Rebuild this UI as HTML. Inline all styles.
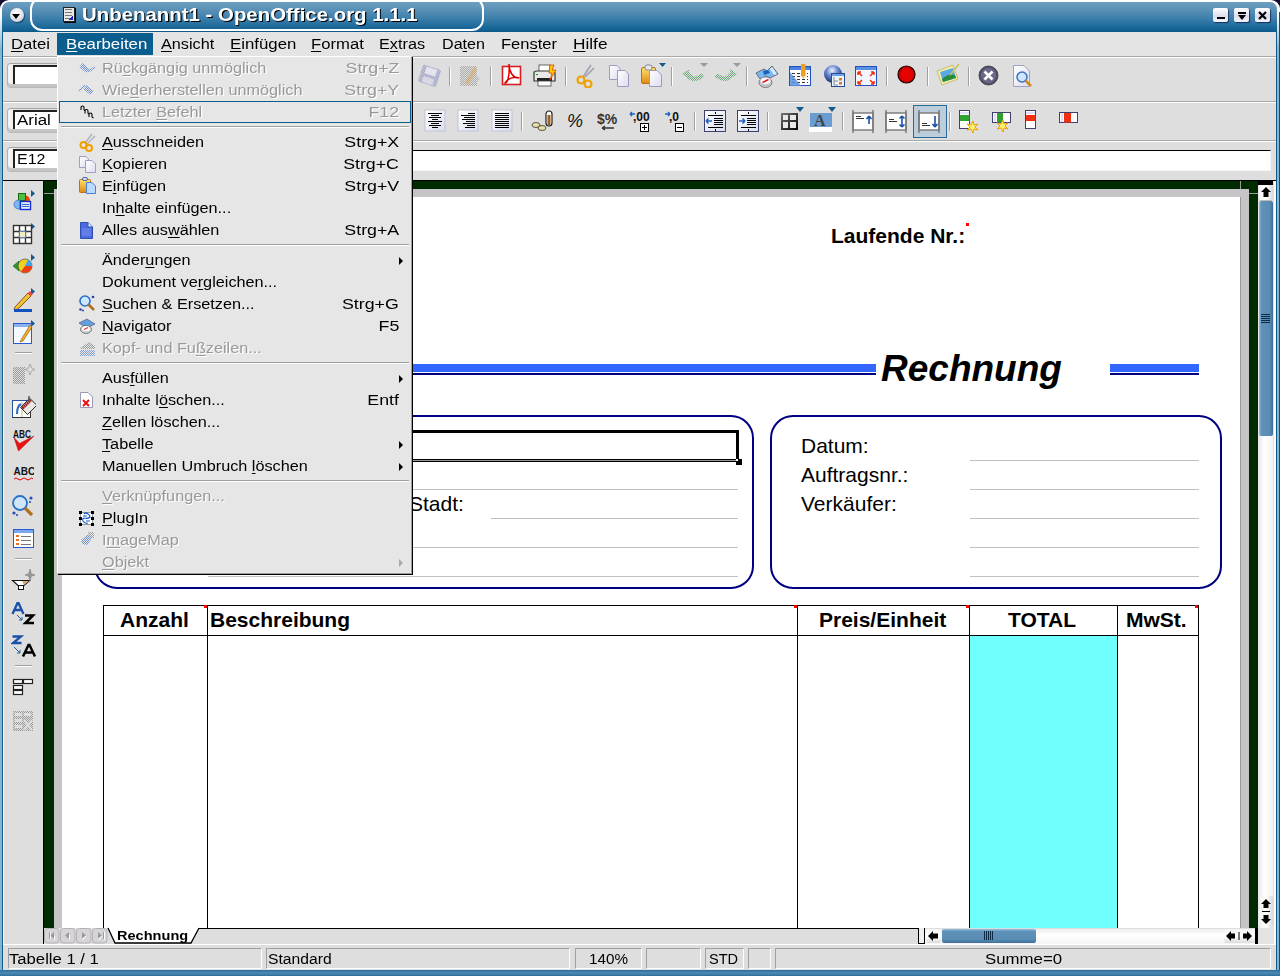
<!DOCTYPE html>
<html><head><meta charset="utf-8">
<style>
*{box-sizing:border-box}
html,body{margin:0;padding:0}
body{width:1280px;height:976px;overflow:hidden;position:relative;background:#e4e4e4;font-family:"Liberation Sans",sans-serif;}
.a{position:absolute}
.t{position:absolute;white-space:pre;line-height:1;font-size:14px;color:#000;transform-origin:0 0}
.u{text-decoration:underline;text-underline-offset:2px}
.m{transform:scaleX(1.16)}
.m.r{transform-origin:100% 0;transform:scaleX(1.27)}
.dis{color:#999;text-shadow:1px 1px 0 #fff}
.sep{width:2px;height:19px;border-left:1px solid #a0a0a0;border-right:1px solid #fff}
</style></head><body>

<!-- desktop corners -->
<div class="a" style="left:0;top:0;width:12px;height:12px;background:#140c30"></div>
<div class="a" style="left:1268px;top:0;width:12px;height:12px;background:#140c30"></div>
<!-- window frame -->
<div class="a" style="left:0;top:0;width:1280px;height:976px;border-radius:9px 9px 0 0;background:linear-gradient(#fff 0,#fff 14px,#8ab3d0 50px,#8ab3d0 100%)"></div>
<div class="a" style="left:2px;top:2px;width:1275px;height:968px;border-radius:7px 7px 0 0;background:linear-gradient(#6c9fc1 0,#5f94b9 6px,#4282ad 15px,#1f6c9c 24px,#0f5f90 29px,#0a5283 30px,#0c5c8c 31px,#0c5c8c 100%)"></div>
<div class="a" style="left:1279px;top:12px;width:1px;height:964px;background:#1a4a70"></div>
<div class="a" style="left:0;top:970px;width:1280px;height:6px;background:linear-gradient(#2a6e9c,#4f8ab3 50%,#2a6e9c)"></div>
<!-- title pill -->
<div class="a" style="left:30px;top:-3px;width:454px;height:34px;border:2.5px solid #fff;border-radius:12px;"></div>

<!-- UI area -->
<div class="a" style="left:3px;top:32px;width:1273px;height:938px;background:#e4e4e4"></div>


<!-- title content -->
<div class="a" style="left:10px;top:8px;width:14px;height:14px;border-radius:50%;background:radial-gradient(circle at 45% 35%,#fff 0,#e8e8f0 45%,#b8bccc 100%);box-shadow:1px 1px 1px rgba(0,0,40,.5)"></div>
<div class="a" style="left:12px;top:14px;width:0;height:0;border-left:4.5px solid transparent;border-right:4.5px solid transparent;border-top:5px solid #000"></div>
<div class="a" style="left:63px;top:7px;width:12px;height:15px;background:#e8e8e8;border:1px solid #222;box-shadow:1px 1px 0 #000"></div>
<div class="a" style="left:65px;top:9px;width:7px;height:1px;background:#777;box-shadow:0 3px 0 #777,0 6px 0 #777,0 9px 0 #777"></div>
<div class="a" style="left:69px;top:16px;width:4px;height:4px;background:linear-gradient(135deg,transparent 50%,#2020c0 50%)"></div>
<div class="t" style="left:82px;top:5.5px;font-size:18.5px;font-weight:bold;color:#fff;text-shadow:1px 1px 0 #000;transform:scaleX(1.103)">Unbenannt1 - OpenOffice.org 1.1.1</div>

<!-- title buttons -->
<div class="a" style="left:1213px;top:8px;width:15px;height:14px;border-radius:2px;background:linear-gradient(#fff,#dde 60%,#f4f4ff);box-shadow:1px 1px 1px rgba(0,0,50,.6)"></div>
<div class="a" style="left:1217px;top:17px;width:8px;height:2px;background:#000"></div>
<div class="a" style="left:1234px;top:8px;width:15px;height:14px;border-radius:2px;background:linear-gradient(#fff,#dde 60%,#f4f4ff);box-shadow:1px 1px 1px rgba(0,0,50,.6)"></div>
<div class="a" style="left:1238px;top:12px;width:8px;height:2px;background:#000"></div>
<div class="a" style="left:1238px;top:15px;width:0;height:0;border-left:4px solid transparent;border-right:4px solid transparent;border-top:5px solid #000"></div>
<div class="a" style="left:1255px;top:8px;width:15px;height:14px;border-radius:2px;background:linear-gradient(#fff,#dde 60%,#f4f4ff);box-shadow:1px 1px 1px rgba(0,0,50,.6)"></div>
<svg class="a" style="left:1258px;top:11px" width="9" height="9"><path d="M1 1L8 8M8 1L1 8" stroke="#000" stroke-width="2.2"/></svg>

<!-- menubar -->
<div class="a" style="left:3px;top:56px;width:1273px;height:1px;background:#a8a8a8"></div>
<div class="a" style="left:3px;top:57px;width:1273px;height:1px;background:#fff"></div>
<div class="a" style="left:57px;top:33px;width:96px;height:22px;background:#0b5d8e"></div>
<div class="t" style="left:11px;top:37px;transform:scaleX(1.19)"><span class="u">D</span>atei</div>
<div class="t" style="left:65.5px;top:37px;color:#fff;transform:scaleX(1.2)"><span class="u">B</span>earbeiten</div>
<div class="t" style="left:161px;top:37px;transform:scaleX(1.16)"><span class="u">A</span>nsicht</div>
<div class="t" style="left:230px;top:37px;transform:scaleX(1.2)"><span class="u">E</span>infügen</div>
<div class="t" style="left:311px;top:37px;transform:scaleX(1.19)"><span class="u">F</span>ormat</div>
<div class="t" style="left:379px;top:37px;transform:scaleX(1.16)">E<span class="u">x</span>tras</div>
<div class="t" style="left:442px;top:37px;transform:scaleX(1.15)">Da<span class="u">t</span>en</div>
<div class="t" style="left:501px;top:37px;transform:scaleX(1.18)">Fen<span class="u">s</span>ter</div>
<div class="t" style="left:573px;top:37px;transform:scaleX(1.23)"><span class="u">H</span>ilfe</div>

<!-- toolbar rows -->
<div class="a" style="left:3px;top:58px;width:1273px;height:43px;background:#dedede"></div>
<div class="a" style="left:3px;top:101px;width:1273px;height:1px;background:#a8a8a8"></div>
<div class="a" style="left:3px;top:102px;width:1273px;height:1px;background:#fff"></div>
<div class="a" style="left:3px;top:103px;width:1273px;height:37px;background:#dedede"></div>
<div class="a" style="left:3px;top:140px;width:1273px;height:1px;background:#a8a8a8"></div>
<div class="a" style="left:3px;top:141px;width:1273px;height:1px;background:#fff"></div>
<div class="a" style="left:3px;top:142px;width:1273px;height:38px;background:#dedede"></div>
<div class="a" style="left:3px;top:180px;width:1273px;height:1px;background:#000"></div>

<!-- combos -->
<div class="a" style="left:7px;top:63px;width:200px;height:24px;border-radius:4px;border-top:1px solid #a4a4a4;border-left:1px solid #b0b0b0;background:linear-gradient(90deg,#f8f8f8,#e4e4e4 10px);box-shadow:0 1px 0 #b8b8b8, inset 0 -3px 1px #c4c4c4"></div>
<div class="a" style="left:13px;top:65px;width:190px;height:19px;background:#fff;border-top:2px solid #222;border-left:2px solid #222"></div>
<div class="a" style="left:7px;top:108px;width:200px;height:24px;border-radius:4px;border-top:1px solid #a4a4a4;border-left:1px solid #b0b0b0;background:linear-gradient(90deg,#f8f8f8,#e4e4e4 10px);box-shadow:0 1px 0 #b8b8b8, inset 0 -3px 1px #c4c4c4"></div>
<div class="a" style="left:13px;top:110px;width:190px;height:19px;background:#fff;border-top:2px solid #222;border-left:2px solid #222"></div>
<div class="t" style="left:17px;top:113px;transform:scaleX(1.21)">Arial</div>
<div class="a" style="left:7px;top:147px;width:100px;height:24px;border-radius:4px;border-top:1px solid #a4a4a4;border-left:1px solid #b0b0b0;background:linear-gradient(90deg,#f8f8f8,#e4e4e4 10px);box-shadow:0 1px 0 #b8b8b8, inset 0 -3px 1px #c4c4c4"></div>
<div class="a" style="left:13px;top:149px;width:90px;height:19px;background:#fff;border-top:2px solid #222;border-left:2px solid #222"></div>
<div class="t" style="left:17px;top:152px;font-size:14px;transform:scaleX(1.14)">E12</div>
<!-- formula input -->
<div class="a" style="left:200px;top:150px;width:1071px;height:21px;background:#fff;border-top:1px solid #000;border-right:1px solid #f4f4f4;border-bottom:1px solid #f4f4f4"></div>


<!-- ICONS_TB_START -->
<svg class="a" style="left:0;top:0" width="1" height="1"><defs>
<pattern id="dith" width="2" height="2" patternUnits="userSpaceOnUse"><rect width="1" height="1" fill="#8890c0"/><rect x="1" y="1" width="1" height="1" fill="#8890c0"/></pattern>
<pattern id="dithg" width="2" height="2" patternUnits="userSpaceOnUse"><rect width="1" height="1" fill="#6aaa78"/><rect x="1" y="1" width="1" height="1" fill="#6aaa78"/></pattern>
<pattern id="dithgr" width="2" height="2" patternUnits="userSpaceOnUse"><rect width="1" height="1" fill="#9a9a9a"/><rect x="1" y="1" width="1" height="1" fill="#9a9a9a"/></pattern>
<pattern id="dithb" width="2" height="2" patternUnits="userSpaceOnUse"><rect width="1" height="1" fill="#7090d0"/><rect x="1" y="1" width="1" height="1" fill="#7090d0"/></pattern>
<linearGradient id="gold" x1="0" y1="0" x2="0" y2="1"><stop offset="0" stop-color="#ffe070"/><stop offset="1" stop-color="#e08a10"/></linearGradient>
<linearGradient id="page" x1="0" y1="0" x2="1" y2="1"><stop offset="0" stop-color="#fff"/><stop offset="1" stop-color="#dcdcf0"/></linearGradient>
<linearGradient id="btn" x1="0" y1="0" x2="1" y2="1"><stop offset="0" stop-color="#fff"/><stop offset="1" stop-color="#d8dcf0"/></linearGradient>
<linearGradient id="blu" x1="0" y1="0" x2="0" y2="1"><stop offset="0" stop-color="#9cc4f4"/><stop offset="1" stop-color="#2c64d0"/></linearGradient>
</defs></svg>
<!-- toolbar separators row1 -->
<div class="a sep" style="left:449px;top:67px"></div>
<div class="a sep" style="left:490px;top:67px"></div>
<div class="a sep" style="left:565px;top:67px"></div>
<div class="a sep" style="left:671px;top:67px"></div>
<div class="a sep" style="left:746px;top:67px"></div>
<div class="a sep" style="left:886px;top:67px"></div>
<div class="a sep" style="left:927px;top:67px"></div>
<div class="a sep" style="left:968px;top:67px"></div>
<!-- row2 separators -->
<div class="a sep" style="left:521px;top:112px"></div>
<div class="a sep" style="left:694px;top:112px"></div>
<div class="a sep" style="left:767px;top:112px"></div>
<div class="a sep" style="left:842px;top:112px"></div>
<div class="a sep" style="left:949px;top:112px"></div>

<!-- save disabled -->
<svg class="a" style="left:417px;top:63px" width="26" height="26"><g transform="rotate(18 13 13)"><rect x="3" y="4" width="19" height="18" rx="2" fill="url(#dith)"/><rect x="7" y="5" width="11" height="7" fill="#e4e4ee"/><rect x="7" y="15" width="11" height="6" fill="#d8d8e4"/></g></svg>
<!-- edit disabled -->
<svg class="a" style="left:459px;top:64px" width="24" height="24"><rect x="1" y="2" width="17" height="20" fill="url(#dithgr)" opacity=".75"/><path d="M6 19L15 3L18 5L9 21Z" fill="#d8b070" opacity=".7"/><path d="M18 12L21 15L18 18Z" fill="#c8c8c8"/></svg>
<!-- pdf -->
<svg class="a" style="left:501px;top:64px" width="22" height="23"><rect x="1.5" y="2.5" width="18" height="18" fill="#fff" stroke="#d42020" stroke-width="1.6"/><path d="M8 0C8 8 12 14 18 14C14 12 7 14 4 19C6 20 9 12 8 1" fill="none" stroke="#e00000" stroke-width="1.5"/></svg>
<!-- printer -->
<svg class="a" style="left:533px;top:64px" width="25" height="24"><rect x="6" y="1" width="11" height="7" fill="#fff" stroke="#444" stroke-width=".8"/><path d="M1 9Q1 7 4 7H19Q22 7 22 9V17H1Z" fill="#e8e8e8" stroke="#333" stroke-width="1.2"/><rect x="4" y="14" width="15" height="3" fill="#222"/><rect x="5" y="17" width="13" height="5" fill="#fff" stroke="#444" stroke-width=".8"/><rect x="3" y="10" width="2" height="1" fill="#0a0"/><path d="M17 1L21 1L19 6L23 6L17 16L19 9L16 9Z" fill="#ffd000" stroke="#e04000" stroke-width=".8"/></svg>
<!-- scissors -->
<svg class="a" style="left:576px;top:64px" width="20" height="24"><path d="M7 13L15 1M9 13L18 4" stroke="#a0a0b0" stroke-width="1.6"/><circle cx="5" cy="16" r="3.5" fill="none" stroke="#f0a000" stroke-width="2.2"/><circle cx="12" cy="20" r="3.5" fill="none" stroke="#f0a000" stroke-width="2.2"/></svg>
<!-- copy -->
<svg class="a" style="left:608px;top:64px" width="23" height="24"><path d="M1.5 1.5H9L12 4.5V15.5H1.5Z" fill="url(#page)" stroke="#9c9cc0"/><path d="M9.5 6.5H17L20.5 10V22.5H9.5Z" fill="url(#page)" stroke="#9c9cc0"/></svg>
<!-- paste -->
<svg class="a" style="left:640px;top:63px" width="28" height="25"><rect x="1.5" y="4.5" width="14" height="16" rx="1.5" fill="url(#gold)" stroke="#c07010"/><rect x="5" y="2" width="7" height="5" rx="2" fill="#e8e8f0" stroke="#888"/><path d="M9.5 7.5H17L21.5 12V23.5H9.5Z" fill="url(#page)" stroke="#9c9cc0"/><path d="M19 0H26L22.5 4Z" fill="#15598a"/></svg>
<!-- undo / redo disabled -->
<svg class="a" style="left:681px;top:63px" width="28" height="22"><path d="M1 11L8 6V16Z" fill="url(#dithg)"/><path d="M7 11Q11 20 22 12" fill="none" stroke="url(#dithg)" stroke-width="4.5"/><path d="M19 0H27L23 4Z" fill="#9a9a9a"/></svg>
<svg class="a" style="left:714px;top:63px" width="28" height="22"><path d="M23 11L16 6V16Z" fill="url(#dithg)"/><path d="M17 11Q13 20 2 12" fill="none" stroke="url(#dithg)" stroke-width="4.5"/><path d="M19 0H27L23 4Z" fill="#9a9a9a"/></svg>
<!-- navigator -->
<svg class="a" style="left:755px;top:65px" width="24" height="23"><path d="M1 8L9 4L12 6L17 1L23 9L15 13L11 11L5 14Z" fill="#7ab8f0" stroke="#444" stroke-width=".7"/><path d="M8 6L13 5L15 8L9 10Z" fill="#1a60c0"/><path d="M17 2L22 9L19 10L15 4Z" fill="#d8ecff"/><ellipse cx="10.5" cy="17.5" rx="6.5" ry="5" fill="#c8c8c8" stroke="#666" stroke-width=".8"/><ellipse cx="10.5" cy="16" rx="5.5" ry="3.8" fill="#f4f8ff" stroke="#88a" stroke-width=".5"/><path d="M7.5 17.5L13.5 14.5" stroke="#e82020" stroke-width="1.6"/></svg>
<!-- page with pencil -->
<svg class="a" style="left:788px;top:64px" width="24" height="24"><rect x="1.5" y="2.5" width="21" height="19" fill="#fff" stroke="#2050c0"/><rect x="2" y="3" width="20" height="3" fill="#4a80e0"/><path d="M4 9.5H20M4 12.5H20M4 15.5H20M4 18.5H20" stroke="#333" stroke-width="1" stroke-dasharray="3 2"/><path d="M2 8L2 22L13 22Z" fill="#5a90e0" opacity=".85"/><rect x="13" y="0" width="4.5" height="12" fill="#f0a020"/><path d="M13 12L15.25 15L17.5 12Z" fill="#e8c890"/></svg>
<!-- globe -->
<svg class="a" style="left:823px;top:64px" width="23" height="24"><defs><radialGradient id="glb" cx=".45" cy=".3" r=".7"><stop offset="0" stop-color="#eef2ff"/><stop offset=".45" stop-color="#6a88d0"/><stop offset="1" stop-color="#1a2a70"/></radialGradient></defs><circle cx="10" cy="10" r="9" fill="url(#glb)"/><rect x="8.5" y="9.5" width="13" height="13" fill="#eaf4ff" stroke="#2a4a8a"/><rect x="9" y="10" width="12" height="2" fill="#6aa0e8"/><rect x="16" y="14" width="3" height="2.5" fill="#f07020"/><rect x="16" y="18" width="3" height="2.5" fill="#f07020"/><path d="M11 13V21H15M11 17H15" stroke="#777" fill="none" stroke-width=".8"/></svg>
<!-- fullscreen -->
<svg class="a" style="left:854px;top:65px" width="24" height="22"><rect x="1.5" y="1.5" width="21" height="19" fill="#f4f6ff" stroke="#1f4fc0"/><rect x="2" y="2" width="20" height="3" fill="#5b8fe0"/><path d="M4 7L8 11M4 7H7M4 7V10 M20 7L16 11M20 7H17M20 7V10 M4 19L8 15M4 19H7M4 19V16 M20 19L16 15M20 19H17M20 19V16" stroke="#f03000" stroke-width="1.5" fill="none"/></svg>
<!-- record -->
<svg class="a" style="left:897px;top:65px" width="20" height="20"><circle cx="9.5" cy="9.5" r="8.5" fill="#d00000" stroke="#200" stroke-width="1.2"/><circle cx="10" cy="10" r="6" fill="#e60000"/></svg>
<!-- picture -->
<svg class="a" style="left:936px;top:63px" width="25" height="24"><path d="M1 8L17 2L22 16L6 22Z" fill="#f4f0a0" stroke="#c0b060" stroke-width=".8"/><path d="M4 9L17 5L20 15L7 19Z" fill="#5aa8e8"/><path d="M6 16Q12 10 19 12L20 15L7 19Z" fill="#2a8a40"/><path d="M14 12L23 1" stroke="#c8c060" stroke-width="1.5"/></svg>
<!-- close circle -->
<svg class="a" style="left:978px;top:65px" width="22" height="22"><circle cx="10.5" cy="10.5" r="9.5" fill="#50506a" stroke="#333" stroke-width=".8"/><circle cx="10.5" cy="10.5" r="7.5" fill="#6a6a88"/><path d="M6.5 6.5L14.5 14.5M14.5 6.5L6.5 14.5" stroke="#fff" stroke-width="2.6"/></svg>
<!-- preview -->
<svg class="a" style="left:1012px;top:64px" width="22" height="24"><path d="M1.5 1.5H12L17.5 7V22.5H1.5Z" fill="url(#page)" stroke="#a0a0c0"/><circle cx="10" cy="13" r="5" fill="#cfe4ff" stroke="#3a70c0" stroke-width="1.5"/><path d="M13.5 16.5L19 22" stroke="#d08a20" stroke-width="2.5"/></svg>

<!-- ROW 2 -->
<svg class="a" style="left:424px;top:109px" width="23" height="24"><rect x="1" y="1" width="20" height="21" fill="url(#btn)" stroke="#b8bcd0" stroke-width=".8"/><rect x="4" y="4" width="14" height="1" fill="#000"/><rect x="7" y="6" width="8" height="1" fill="#000"/><rect x="5" y="8" width="12" height="1" fill="#000"/><rect x="8" y="10" width="6" height="1" fill="#000"/><rect x="4" y="12" width="14" height="1" fill="#000"/><rect x="7" y="14" width="8" height="1" fill="#000"/><rect x="5" y="16" width="12" height="1" fill="#000"/><rect x="8" y="18" width="6" height="1" fill="#000"/></svg>
<svg class="a" style="left:457px;top:109px" width="23" height="24"><rect x="1" y="1" width="20" height="21" fill="url(#btn)" stroke="#b8bcd0" stroke-width=".8"/><rect x="11" y="4" width="7" height="1" fill="#000"/><rect x="4" y="6" width="14" height="1" fill="#000"/><rect x="7" y="8" width="11" height="1" fill="#000"/><rect x="5" y="10" width="13" height="1" fill="#000"/><rect x="9" y="12" width="9" height="1" fill="#000"/><rect x="6" y="14" width="12" height="1" fill="#000"/><rect x="10" y="16" width="8" height="1" fill="#000"/><rect x="8" y="18" width="10" height="1" fill="#000"/></svg>
<svg class="a" style="left:491px;top:109px" width="23" height="24"><rect x="1" y="1" width="20" height="21" fill="url(#btn)" stroke="#b8bcd0" stroke-width=".8"/><rect x="4" y="4" width="14" height="1" fill="#000"/><rect x="4" y="6" width="14" height="1" fill="#000"/><rect x="4" y="8" width="14" height="1" fill="#000"/><rect x="4" y="10" width="14" height="1" fill="#000"/><rect x="4" y="12" width="14" height="1" fill="#000"/><rect x="4" y="14" width="14" height="1" fill="#000"/><rect x="4" y="16" width="14" height="1" fill="#000"/><rect x="4" y="18" width="14" height="1" fill="#000"/></svg>
<!-- currency -->
<svg class="a" style="left:531px;top:110px" width="24" height="22"><ellipse cx="5" cy="15" rx="4" ry="2.5" fill="#e8e0a0" stroke="#333" stroke-width=".8"/><ellipse cx="11" cy="18" rx="4" ry="2.5" fill="#e8e0a0" stroke="#333" stroke-width=".8"/><rect x="15" y="1" width="6" height="15" rx="3" fill="#fff" stroke="#222" stroke-width="1.2"/><rect x="16.5" y="5" width="3" height="10" fill="#a06020"/></svg>
<!-- percent -->
<svg class="a" style="left:567px;top:112px" width="20" height="18"><text x="0" y="15" font-family="Liberation Sans" font-size="18" fill="#111" font-style="italic">%</text></svg>
<!-- $% -->
<svg class="a" style="left:597px;top:111px" width="24" height="21"><text x="0" y="13" font-family="Liberation Sans" font-size="14" font-weight="bold" fill="#333">$%</text><path d="M5 17H17M5 17L8 15M5 17L8 19" stroke="#333" stroke-width="1.3" fill="none"/></svg>
<!-- +,00 -->
<svg class="a" style="left:629px;top:110px" width="24" height="23"><text x="4" y="11" font-family="Liberation Sans" font-size="12" font-weight="bold" fill="#111">,00</text><path d="M1 4H6M1 4L3 2M1 4L3 6" stroke="#2060c0" stroke-width="1.4" fill="none"/><rect x="11.5" y="13.5" width="8" height="8" fill="#fff" stroke="#000"/><path d="M13 17.5H18M15.5 15V20" stroke="#000"/></svg>
<!-- ,0- -->
<svg class="a" style="left:664px;top:110px" width="24" height="23"><text x="5" y="11" font-family="Liberation Sans" font-size="12" font-weight="bold" fill="#111">,0</text><path d="M1 4H6M6 4L4 2M6 4L4 6" stroke="#2060c0" stroke-width="1.4" fill="none"/><rect x="11.5" y="13.5" width="8" height="8" fill="#fff" stroke="#000"/><path d="M13 17.5H18" stroke="#000"/></svg>
<!-- indent -->
<svg class="a" style="left:703px;top:109px" width="25" height="25"><rect x="1.5" y="1.5" width="21" height="21" fill="url(#btn)" stroke="#404070"/><rect x="12" y="3" width="1" height="2" fill="#000"/><rect x="12" y="20" width="1" height="2" fill="#000"/><rect x="5" y="6" width="15" height="1" fill="#000"/><rect x="11" y="9" width="9" height="1" fill="#000"/><rect x="11" y="11" width="9" height="1" fill="#000"/><rect x="11" y="13" width="9" height="1" fill="#000"/><rect x="11" y="15" width="9" height="1" fill="#000"/><rect x="5" y="18" width="15" height="1" fill="#000"/><path d="M3 12H9M3 12L5.5 9.5M3 12L5.5 14.5" stroke="#2060c0" stroke-width="1.5" fill="none"/></svg>
<svg class="a" style="left:736px;top:109px" width="25" height="25"><rect x="1.5" y="1.5" width="21" height="21" fill="url(#btn)" stroke="#404070"/><rect x="12" y="3" width="1" height="2" fill="#000"/><rect x="12" y="20" width="1" height="2" fill="#000"/><rect x="5" y="6" width="15" height="1" fill="#000"/><rect x="11" y="9" width="9" height="1" fill="#000"/><rect x="11" y="11" width="9" height="1" fill="#000"/><rect x="11" y="13" width="9" height="1" fill="#000"/><rect x="11" y="15" width="9" height="1" fill="#000"/><rect x="5" y="18" width="15" height="1" fill="#000"/><path d="M3 12H9M9 12L6.5 9.5M9 12L6.5 14.5" stroke="#2060c0" stroke-width="1.5" fill="none"/></svg>
<!-- borders -->
<svg class="a" style="left:779px;top:107px" width="26" height="25"><defs><linearGradient id="bgr" x1="0" y1="0" x2="1" y2="1"><stop offset="0" stop-color="#777"/><stop offset="1" stop-color="#000"/></linearGradient></defs><rect x="2" y="6" width="17" height="17" fill="url(#bgr)"/><rect x="4" y="8" width="5" height="5" fill="#e8e8e8"/><rect x="11" y="8" width="6" height="5" fill="#e8e8e8"/><rect x="4" y="15" width="5" height="6" fill="#e8e8e8"/><rect x="11" y="15" width="6" height="6" fill="#e8e8e8"/><path d="M17 0H25L21 5Z" fill="#15598a"/></svg>
<!-- font color -->
<svg class="a" style="left:809px;top:107px" width="28" height="26"><rect x="1" y="6" width="22" height="14" fill="#6a9ed0"/><rect x="0" y="20" width="23" height="5" fill="#fff"/><text x="5" y="19" font-family="Liberation Serif" font-size="16" font-weight="bold" fill="#444">A</text><path d="M19 0H27L23 5Z" fill="#15598a"/></svg>
<!-- align top / vcenter / bottom -->
<svg class="a" style="left:851px;top:110px" width="25" height="24"><rect x="2" y="3" width="20" height="17" fill="#fff" stroke="#777" stroke-width="1.4"/><path d="M2 0V23M22 0V23" stroke="#777" stroke-width="1.4"/><rect x="5" y="6" width="5" height="1" fill="#333"/><rect x="5" y="8" width="8" height="1" fill="#333"/><path d="M18 14V6M18 6L15.5 9M18 6L20.5 9" stroke="#1b4fa8" stroke-width="1.6" fill="none"/></svg>
<svg class="a" style="left:884px;top:110px" width="25" height="24"><rect x="2" y="3" width="20" height="17" fill="#fff" stroke="#777" stroke-width="1.4"/><path d="M2 0V23M22 0V23" stroke="#777" stroke-width="1.4"/><rect x="5" y="9" width="5" height="1" fill="#333"/><rect x="5" y="11" width="8" height="1" fill="#333"/><path d="M18 6V17M18 6L15.5 8.5M18 6L20.5 8.5M18 17L15.5 14.5M18 17L20.5 14.5" stroke="#1b4fa8" stroke-width="1.6" fill="none"/></svg>
<div class="a" style="left:913px;top:105px;width:34px;height:33px;background:#bccedc;border:1px solid #2a6a96"></div>
<svg class="a" style="left:917px;top:110px" width="25" height="24"><rect x="2" y="3" width="20" height="17" fill="#fff" stroke="#777" stroke-width="1.4"/><path d="M2 0V23M22 0V23" stroke="#777" stroke-width="1.4"/><rect x="5" y="13" width="5" height="1" fill="#333"/><rect x="5" y="15" width="8" height="1" fill="#333"/><path d="M18 6V17M18 17L15.5 14M18 17L20.5 14" stroke="#1b4fa8" stroke-width="1.6" fill="none"/></svg>
<!-- insert rows / cols, delete rows / cols -->
<svg class="a" style="left:958px;top:109px" width="24" height="24"><rect x="1.5" y="1.5" width="10" height="18" fill="#fff" stroke="#404070"/><rect x="2" y="6" width="9.5" height="6" fill="#30a030"/><rect x="2" y="3" width="9" height="2" fill="#e0e0f8"/><path d="M15 12L16 16L20 15L17 18L20 21L16 20L15 24L13 20L9 21L12 18L9 15L13 16Z" fill="#fff070" stroke="#f0a000"/></svg>
<svg class="a" style="left:991px;top:111px" width="24" height="24"><rect x="1.5" y="1.5" width="18" height="10" fill="#fff" stroke="#404070"/><rect x="6" y="2" width="6" height="9.5" fill="#30a030"/><rect x="3" y="2" width="2" height="9" fill="#e0e0f8"/><path d="M12 9L13 13L17 12L14 15L17 18L13 17L12 21L10 17L6 18L9 15L6 12L10 13Z" fill="#fff070" stroke="#f0a000"/></svg>
<svg class="a" style="left:1024px;top:109px" width="14" height="22"><rect x="1.5" y="1.5" width="10" height="18" fill="#fff" stroke="#404070"/><rect x="2" y="6" width="9.5" height="6" fill="#f03010"/><rect x="2" y="3" width="9" height="2" fill="#e0e0f8"/></svg>
<svg class="a" style="left:1058px;top:111px" width="22" height="14"><rect x="1.5" y="1.5" width="18" height="10" fill="#fff" stroke="#404070"/><rect x="6" y="2" width="7" height="9.5" fill="#f03010"/><rect x="3" y="2" width="2" height="9" fill="#e0e0f8"/></svg>
<!-- ICONS_TB_END -->

<!-- left vertical toolbar -->
<div class="a" style="left:3px;top:181px;width:40px;height:764px;background:#dedede;border-left:1px solid #fff"></div>
<div class="a" style="left:43px;top:181px;width:1px;height:764px;background:#000"></div>

<!-- ICONS_LEFT_START -->
<!-- shapes -->
<svg class="a" style="left:12px;top:189px" width="24" height="23"><path d="M19 1V8L23 4.5Z" fill="#15598a"/><path d="M11 6Q18 6 18 12H11Z" fill="#f04010"/><rect x="6.5" y="4.5" width="7" height="7" fill="#4cc040" stroke="#1a6a10"/><path d="M8 11Q2 11 2 15.5Q2 20 8 20Z" fill="#7ab8f0" stroke="#3a70c0" stroke-width=".8"/><rect x="8.5" y="12.5" width="10" height="8" fill="#eaf4ff" stroke="#1030d0" stroke-width="1.4"/><path d="M10 15.5H17M10 17.5H17" stroke="#3060d0"/></svg>
<!-- table grid -->
<svg class="a" style="left:12px;top:222px" width="24" height="23"><path d="M19 1V8L23 4.5Z" fill="#15598a"/><rect x="1.5" y="3.5" width="18" height="18" fill="#fff" stroke="#333" stroke-width="1.4"/><path d="M7.5 3V22M13.5 3V22M1 9.5H20M1 15.5H20" stroke="#333" stroke-width="1.4"/><rect x="8" y="10" width="5" height="5" fill="#f0ecc0"/><rect x="7.5" y="9.5" width="6" height="6" fill="none" stroke="#6080c0"/></svg>
<!-- chart -->
<svg class="a" style="left:12px;top:253px" width="24" height="23"><path d="M19 1V8L23 4.5Z" fill="#15598a"/><path d="M1 13L7 8V18Z" fill="#2a9a30" stroke="#145a18" stroke-width=".6"/><circle cx="13" cy="13" r="7" fill="#f0d020" stroke="#333" stroke-width=".6"/><path d="M13 13L20 13A7 7 0 0 1 9 18.5Z" fill="#f04010"/><path d="M13 13L20 13A7 7 0 0 0 16 6.8Z" fill="#40a0f0"/></svg>
<!-- pencil -->
<svg class="a" style="left:12px;top:287px" width="24" height="26"><path d="M19 1V8L23 4.5Z" fill="#15598a"/><path d="M3 20L16 6L19 9L6 22L2 23Z" fill="#f4c030" stroke="#7a4a10" stroke-width=".9"/><path d="M16 6L18 4L21 7L19 9Z" fill="#f04040"/><rect x="2" y="22" width="18" height="3" fill="#1050c0"/></svg>
<!-- form -->
<svg class="a" style="left:12px;top:319px" width="24" height="27"><path d="M19 1V8L23 4.5Z" fill="#15598a"/><rect x="1.5" y="4.5" width="18" height="20" fill="#f4f8ff" stroke="#2a5ad0"/><rect x="2" y="5" width="17" height="3" fill="#8ab0f0"/><path d="M9 21L18 6L20 8L11 22L8 23Z" fill="#f4b030" stroke="#9a6010" stroke-width=".7"/></svg>
<div class="a" style="left:15px;top:352px;width:17px;height:1px;background:#a0a0a0;box-shadow:0 1px 0 #fff"></div>
<!-- disabled -->
<svg class="a" style="left:12px;top:363px" width="23" height="22"><rect x="1" y="4" width="12" height="17" fill="url(#dithgr)"/><path d="M18 1L19.5 5L23 6.5L19.5 8L18 12L16.5 8L13 6.5L16.5 5Z" fill="none" stroke="#aaa"/></svg>
<!-- paint -->
<svg class="a" style="left:11px;top:396px" width="25" height="25"><rect x="1.5" y="4.5" width="18" height="17" fill="#fffef4" stroke="#2a55a0"/><path d="M19.5 5V21.5H1.5" fill="none" stroke="#333"/><path d="M11 6V21" stroke="#bbb"/><path d="M6 18Q6 10 10 8" stroke="#2a6ad0" stroke-width="2" fill="none"/><g transform="rotate(45 18 10)"><rect x="13" y="4" width="10" height="13" fill="#e8e8e8" stroke="#222" stroke-width=".9"/><rect x="13.5" y="4.5" width="3" height="12" fill="#a02020"/><path d="M14 6H16M14 8H16M14 10H16M14 12H16M14 14H16" stroke="#fff" stroke-width=".6"/></g><path d="M18 0V6" stroke="#555" stroke-width="1.5"/></svg>
<!-- ABC check -->
<svg class="a" style="left:11px;top:428px" width="25" height="25"><text x="2" y="10" font-family="Liberation Sans" font-size="11" font-weight="bold" fill="#111" textLength="18" lengthAdjust="spacingAndGlyphs">ABC</text><path d="M3 9.5L7.5 23L23 8L8.5 15.5Z" fill="#ee1010" stroke="#a00" stroke-width=".5"/></svg>
<!-- ABC wavy -->
<svg class="a" style="left:13px;top:465px" width="21" height="17"><text x="0.5" y="10" font-family="Liberation Sans" font-size="10" font-weight="bold" fill="#111">ABC</text><path d="M1 14Q3 12 5 14T9 14T13 14T17 14T20 14" stroke="#e00000" fill="none" stroke-width="1"/></svg>
<!-- search -->
<svg class="a" style="left:11px;top:494px" width="25" height="24"><circle cx="9" cy="9" r="7" fill="#cfe6ff" stroke="#2a70c8" stroke-width="1.8"/><path d="M14 14L21 21" stroke="#b07020" stroke-width="3.2"/><circle cx="20" cy="4" r="1.6" fill="#2a50b0"/><circle cx="19" cy="8" r="1.1" fill="#2a50b0"/><circle cx="3" cy="19" r="1.6" fill="#2a50b0"/><circle cx="6" cy="21" r="1.1" fill="#2a50b0"/></svg>
<!-- list doc -->
<svg class="a" style="left:12px;top:527px" width="23" height="22"><rect x="1.5" y="2.5" width="20" height="18" fill="#fff" stroke="#2a5ad0"/><rect x="2" y="3" width="19" height="3" fill="#7aa8f0"/><rect x="4" y="8" width="3" height="2" fill="#f07020"/><rect x="4" y="12" width="3" height="2" fill="#f07020"/><rect x="4" y="16" width="3" height="2" fill="#f07020"/><rect x="9" y="9" width="10" height="1" fill="#777"/><rect x="9" y="13" width="10" height="1" fill="#777"/><rect x="9" y="17" width="10" height="1" fill="#777"/></svg>
<div class="a" style="left:15px;top:558px;width:17px;height:1px;background:#a0a0a0;box-shadow:0 1px 0 #fff"></div>
<!-- filter -->
<svg class="a" style="left:11px;top:568px" width="24" height="24"><path d="M1.5 12.5H18.5L13 17.5H7Z" fill="#fff" stroke="#111" stroke-width="1.2"/><path d="M11 13H18L13 17Z" fill="#d8a878"/><rect x="7.5" y="17.5" width="5" height="4" fill="#fff" stroke="#111"/><path d="M19 1L20.3 5.7L24 7L20.3 8.3L19 13L17.7 8.3L14 7L17.7 5.7Z" fill="#999" stroke="#777" stroke-width=".5"/></svg>
<!-- A-Z -->
<svg class="a" style="left:11px;top:602px" width="25" height="23"><path d="M1.5 12L6.5 1H7.5L12.5 12M3.5 8H10.5" fill="none" stroke="#1a50a8" stroke-width="2.3"/><path d="M14 13.5H22L14.5 21H23" fill="none" stroke="#000" stroke-width="2.6"/><path d="M6 13L11 18M11 18H8M11 18V15" stroke="#2a5aa0" stroke-width="1" fill="none"/></svg>
<!-- Z-A -->
<svg class="a" style="left:11px;top:635px" width="25" height="23"><path d="M1.5 1.5H10L2 8H10.5" fill="none" stroke="#1a50a8" stroke-width="2.3"/><path d="M12 21.5L17.5 10H18.5L24 21.5M14 17.5H22" fill="none" stroke="#000" stroke-width="2.5"/><path d="M3 12L9 18M9 18H6M9 18V15" stroke="#2a5aa0" stroke-width="1" fill="none"/></svg>
<div class="a" style="left:15px;top:665px;width:17px;height:1px;background:#a0a0a0;box-shadow:0 1px 0 #fff"></div>
<!-- table shape -->
<svg class="a" style="left:12px;top:678px" width="23" height="19"><rect x="1.5" y="1.5" width="9" height="4" fill="#fff" stroke="#222" stroke-width="1.2"/><rect x="11.5" y="1.5" width="9" height="4" fill="#fff" stroke="#222" stroke-width="1.2"/><rect x="1.5" y="7.5" width="9" height="4" fill="#fff" stroke="#222" stroke-width="1.2"/><rect x="1.5" y="12.5" width="9" height="4" fill="#fff" stroke="#222" stroke-width="1.2"/></svg>
<!-- disabled table -->
<svg class="a" style="left:12px;top:710px" width="23" height="22"><rect x="1" y="1" width="20" height="20" fill="url(#dithgr)"/><rect x="3" y="3" width="7" height="3" fill="#dedede"/><rect x="12" y="3" width="7" height="3" fill="#dedede"/><rect x="3" y="9" width="7" height="3" fill="#dedede"/><rect x="3" y="15" width="7" height="3" fill="#dedede"/><path d="M12 10L20 20M20 10L12 20" stroke="#dedede" stroke-width="2"/></svg>
<!-- ICONS_LEFT_END -->

<!-- content frame: green -->
<div class="a" style="left:44px;top:181px;width:1214px;height:747px;background:#002b00"></div>
<div class="a" style="left:54px;top:189px;width:1195px;height:739px;background:#c6c4c6"></div>
<div class="a" style="left:62px;top:197px;width:1178px;height:731px;background:#fff"></div>
<div class="a" style="left:1240px;top:197px;width:1px;height:731px;background:#9a9a9a"></div>
<div class="a" style="left:1240px;top:181px;width:1px;height:8px;background:#9a9a9a"></div>
<div class="a" style="left:1249px;top:193px;width:9px;height:1px;background:#9a9a9a"></div>
<div class="a" style="left:44px;top:193px;width:10px;height:1px;background:#9a9a9a"></div>


<!-- page content -->
<div class="t" style="left:831px;top:225px;font-size:21px;font-weight:bold">Laufende Nr.:</div>
<div class="a" style="left:966px;top:223px;width:3px;height:3px;background:#f00"></div>
<div class="a" style="left:95px;top:364px;width:781px;height:8px;background:#3366ff"></div>
<div class="a" style="left:95px;top:373px;width:781px;height:2px;background:#000080"></div>
<div class="a" style="left:1110px;top:364px;width:89px;height:8px;background:#3366ff"></div>
<div class="a" style="left:1110px;top:373px;width:89px;height:2px;background:#000080"></div>
<div class="t" style="left:881px;top:350px;font-size:37px;font-weight:bold;font-style:italic">Rechnung</div>

<div class="a" style="left:94px;top:415px;width:660px;height:174px;border:2px solid #000080;border-radius:23px"></div>
<div class="a" style="left:770px;top:415px;width:452px;height:174px;border:2px solid #000080;border-radius:23px"></div>

<div class="a" style="left:208px;top:489px;width:530px;height:1px;background:#c0c0c0"></div>
<div class="a" style="left:491px;top:518px;width:247px;height:1px;background:#c0c0c0"></div>
<div class="a" style="left:208px;top:547px;width:530px;height:1px;background:#c0c0c0"></div>
<div class="a" style="left:208px;top:576px;width:530px;height:1px;background:#c0c0c0"></div>
<div class="t" style="left:409px;top:493px;font-size:21px">Stadt:</div>
<div class="a" style="left:110px;top:430px;width:629px;height:3px;background:#000"></div>
<div class="a" style="left:736px;top:430px;width:3px;height:31px;background:#000"></div>
<div class="a" style="left:110px;top:459px;width:629px;height:1px;background:#000"></div>
<div class="a" style="left:110px;top:460px;width:629px;height:1px;background:#999"></div>
<div class="a" style="left:110px;top:461px;width:629px;height:1px;background:#000"></div>
<div class="a" style="left:736px;top:459px;width:6px;height:6px;background:#000"></div>
<div class="a" style="left:736px;top:459px;width:2px;height:2px;background:#fff"></div>

<div class="t" style="left:801px;top:435px;font-size:21px">Datum:</div>
<div class="t" style="left:801px;top:464px;font-size:21px">Auftragsnr.:</div>
<div class="t" style="left:801px;top:493px;font-size:21px">Verkäufer:</div>
<div class="a" style="left:970px;top:460px;width:229px;height:1px;background:#c0c0c0"></div>
<div class="a" style="left:970px;top:489px;width:229px;height:1px;background:#c0c0c0"></div>
<div class="a" style="left:970px;top:518px;width:229px;height:1px;background:#c0c0c0"></div>
<div class="a" style="left:970px;top:547px;width:229px;height:1px;background:#c0c0c0"></div>
<div class="a" style="left:970px;top:576px;width:229px;height:1px;background:#c0c0c0"></div>

<!-- table -->
<div class="a" style="left:970px;top:636px;width:147px;height:292px;background:#6fffff"></div>
<div class="a" style="left:103px;top:605px;width:1096px;height:1px;background:#000"></div>
<div class="a" style="left:103px;top:635px;width:1096px;height:1px;background:#000"></div>
<div class="a" style="left:103px;top:605px;width:1px;height:323px;background:#000"></div>
<div class="a" style="left:207px;top:605px;width:1px;height:323px;background:#000"></div>
<div class="a" style="left:797px;top:605px;width:1px;height:323px;background:#000"></div>
<div class="a" style="left:969px;top:605px;width:1px;height:323px;background:#000"></div>
<div class="a" style="left:1117px;top:605px;width:1px;height:323px;background:#000"></div>
<div class="a" style="left:1198px;top:605px;width:1px;height:323px;background:#000"></div>
<div class="a" style="left:204px;top:605px;width:3px;height:3px;background:#f00"></div>
<div class="a" style="left:794px;top:605px;width:3px;height:3px;background:#f00"></div>
<div class="a" style="left:966px;top:605px;width:3px;height:3px;background:#f00"></div>
<div class="a" style="left:1195px;top:605px;width:3px;height:3px;background:#f00"></div>
<div class="t" style="left:120px;top:609px;font-size:21px;font-weight:bold">Anzahl</div>
<div class="t" style="left:210px;top:609px;font-size:21px;font-weight:bold">Beschreibung</div>
<div class="t" style="left:819px;top:609px;font-size:21px;font-weight:bold">Preis/Einheit</div>
<div class="t" style="left:1008px;top:609px;font-size:21px;font-weight:bold">TOTAL</div>
<div class="t" style="left:1126px;top:609px;font-size:21px;font-weight:bold">MwSt.</div>

<!-- vertical scrollbar -->
<div class="a" style="left:1258px;top:181px;width:16px;height:4px;background:#000"></div>
<div class="a" style="left:1258px;top:185px;width:16px;height:743px;background:linear-gradient(90deg,#e8e4e8,#fff 40%,#f2f0f2)"></div>
<div class="a" style="left:1273px;top:181px;width:3px;height:764px;background:linear-gradient(90deg,#c8c8c8,#fff 40%,#f4f4f4)"></div>
<div class="a" style="left:1259px;top:185px;width:14px;height:15px;border-radius:2px;background:linear-gradient(90deg,#f4f4f4,#fff 50%,#d8d8d8);box-shadow:0 1px 0 #bbb"></div>
<svg class="a" style="left:1261px;top:187px" width="10" height="11"><path d="M5 0L10 5H7.5V10H2.5V5H0Z" fill="#000"/></svg>
<div class="a" style="left:1259px;top:201px;width:14px;height:235px;border-radius:2px;background:linear-gradient(90deg,#8ab8d8 0,#8ab8d8 1px,#5f92b8 2px,#5a8cb3 75%,#3c709c 100%)"></div>
<div class="a" style="left:1261px;top:314px;width:9px;height:1px;background:#0d2a44;box-shadow:0 2px 0 #0d2a44,0 4px 0 #0d2a44,0 6px 0 #0d2a44,0 8px 0 #0d2a44"></div>
<div class="a" style="left:1259px;top:896px;width:14px;height:32px;border-radius:2px;background:linear-gradient(90deg,#f0f0f0,#fff 50%,#d8d8d8)"></div>
<svg class="a" style="left:1260px;top:899px" width="12" height="26"><path d="M6 0L11 5H8.5V9H3.5V5H1Z M2 12.5H10 M6 25L11 20H8.5V16H3.5V20H1Z" fill="#000" stroke="#000" stroke-width="0"/><rect x="2" y="12" width="8" height="1" fill="#000"/></svg>

<!-- tab bar + hscroll -->
<div class="a" style="left:44px;top:928px;width:1214px;height:16px;background:#dedede"></div>
<div class="a" style="left:108px;top:928px;width:810px;height:1px;background:#000"></div>
<svg class="a" style="left:44px;top:928px" width="64" height="16"><g fill="#d6d4d8" stroke="#b4b2b8" stroke-width="1"><rect x="0.5" y="0.5" width="14.5" height="14.5" rx="3"/><rect x="16.5" y="0.5" width="14.5" height="14.5" rx="3"/><rect x="32.5" y="0.5" width="14.5" height="14.5" rx="3"/><rect x="48.5" y="0.5" width="14.5" height="14.5" rx="3"/></g>
<g fill="#9a9a9a"><rect x="5" y="4" width="1" height="7"/><path d="M6 7.5L10 4V11Z"/><path d="M21 7.5L25 4V11Z"/><path d="M38 4V11L42 7.5Z"/><path d="M54 4V11L58 7.5Z"/><rect x="59" y="4" width="1" height="7"/></g>
<g fill="#fff"><rect x="6" y="4" width="1" height="7" opacity=".8"/><rect x="10" y="8" width="1" height="4"/><rect x="25" y="7" width="1" height="5"/><path d="M38 11L42 7.5L42 8.5L39 12Z"/><path d="M54 11L58 7.5L58 8.5L55 12Z"/><rect x="60" y="4" width="1" height="8"/></g></svg>
<svg class="a" style="left:106px;top:927px" width="95" height="18"><path d="M2 1L9 16H85L93 1" fill="#fff" stroke="#000" stroke-width="1.3"/></svg>
<div class="t" style="left:117px;top:929px;font-size:13px;font-weight:bold;transform:scaleX(1.12)">Rechnung</div>
<div class="a" style="left:918px;top:928px;width:7px;height:16px;border-left:1px solid #000;border-right:1px solid #000;border-bottom:1px solid #000;background:#f0f0f0"></div>
<div class="a" style="left:925px;top:929px;width:330px;height:15px;background:linear-gradient(#eee,#fff 40%,#f6f4f6)"></div>
<div class="a" style="left:926px;top:929px;width:15px;height:14px;border-radius:2px;background:linear-gradient(#f4f4f4,#fff 50%,#dcdcdc)"></div>
<svg class="a" style="left:928px;top:931px" width="11" height="10"><path d="M0 5L5 0V2.5H10V7.5H5V10Z" fill="#000"/></svg>
<div class="a" style="left:942px;top:929px;width:94px;height:14px;border-radius:2px;background:linear-gradient(#8ab8d8 0,#8ab8d8 1px,#5f92b8 2px,#5a8cb3 75%,#3c709c 100%)"></div>
<div class="a" style="left:984px;top:931px;width:1px;height:9px;background:#0d2a44;box-shadow:2px 0 0 #0d2a44,4px 0 0 #0d2a44,6px 0 0 #0d2a44,8px 0 0 #0d2a44"></div>
<div class="a" style="left:1224px;top:929px;width:31px;height:14px;border-radius:2px;background:linear-gradient(#f4f4f4,#fff 50%,#dcdcdc)"></div>
<svg class="a" style="left:1226px;top:931px" width="27" height="10"><path d="M0 5L5 0V2.5H9V7.5H5V10Z M26 5L21 0V2.5H17V7.5H21V10Z" fill="#000"/><rect x="12.5" y="1" width="1" height="8" fill="#000"/></svg>
<div class="a" style="left:1255px;top:928px;width:3px;height:16px;background:#000"></div>

<!-- status bar -->
<div class="a" style="left:3px;top:944px;width:1273px;height:26px;background:#dedede;border-top:1px solid #fff"></div>
<div class="a" style="left:8px;top:948px;width:254px;height:21px;border-top:1px solid #a0a0a0;border-left:1px solid #a0a0a0;border-bottom:1px solid #fff;border-right:1px solid #fff"></div>
<div class="a" style="left:266px;top:948px;width:304px;height:21px;border-top:1px solid #a0a0a0;border-left:1px solid #a0a0a0;border-bottom:1px solid #fff;border-right:1px solid #fff"></div>
<div class="a" style="left:575px;top:948px;width:67px;height:21px;border-top:1px solid #a0a0a0;border-left:1px solid #a0a0a0;border-bottom:1px solid #fff;border-right:1px solid #fff"></div>
<div class="a" style="left:646px;top:948px;width:55px;height:21px;border-top:1px solid #a0a0a0;border-left:1px solid #a0a0a0;border-bottom:1px solid #fff;border-right:1px solid #fff"></div>
<div class="a" style="left:705px;top:948px;width:39px;height:21px;border-top:1px solid #a0a0a0;border-left:1px solid #a0a0a0;border-bottom:1px solid #fff;border-right:1px solid #fff"></div>
<div class="a" style="left:748px;top:948px;width:23px;height:21px;border-top:1px solid #a0a0a0;border-left:1px solid #a0a0a0;border-bottom:1px solid #fff;border-right:1px solid #fff"></div>
<div class="a" style="left:775px;top:948px;width:496px;height:21px;border-top:1px solid #a0a0a0;border-left:1px solid #a0a0a0;border-bottom:1px solid #fff;border-right:1px solid #fff"></div>
<div class="t" style="left:9px;top:952px;transform:scaleX(1.19)">Tabelle 1 / 1</div>
<div class="t" style="left:268px;top:952px;transform:scaleX(1.12)">Standard</div>
<div class="t" style="left:589px;top:952px;transform:scaleX(1.09)">140%</div>
<div class="t" style="left:709px;top:952px;transform:scaleX(1.04)">STD</div>
<div class="t" style="left:985px;top:952px;transform:scaleX(1.2)">Summe=0</div>

<!-- edit menu -->
<div class="a" style="left:57px;top:56px;width:355px;height:518px;background:#e6e6e6;border-top:1px solid #fff;border-left:1px solid #fff;border-right:1px solid #a0a0a0;border-bottom:1px solid #a0a0a0;box-shadow:1px 1px 0 #000"></div>
<div class="a" style="left:59px;top:101px;width:352px;height:22px;border:1px solid #0b5d8e"></div>
<div class="a" style="left:61px;top:126px;width:348px;height:1px;background:#a0a0a0"></div>
<div class="a" style="left:61px;top:127px;width:348px;height:1px;background:#fff"></div>
<div class="a" style="left:61px;top:244px;width:348px;height:1px;background:#a0a0a0"></div>
<div class="a" style="left:61px;top:245px;width:348px;height:1px;background:#fff"></div>
<div class="a" style="left:61px;top:362px;width:348px;height:1px;background:#a0a0a0"></div>
<div class="a" style="left:61px;top:363px;width:348px;height:1px;background:#fff"></div>
<div class="a" style="left:61px;top:480px;width:348px;height:1px;background:#a0a0a0"></div>
<div class="a" style="left:61px;top:481px;width:348px;height:1px;background:#fff"></div>
<div class="t m dis" style="left:102px;top:61px">Rü<span class="u">c</span>kgängig unmöglich</div>
<div class="t m dis r" style="right:881px;top:61px">Strg+Z</div>
<div class="t m dis" style="left:102px;top:83px">Wie<span class="u">d</span>erherstellen unmöglich</div>
<div class="t m dis r" style="right:881px;top:83px">Strg+Y</div>
<div class="t m dis" style="left:102px;top:105px">Letzter <span class="u">B</span>efehl</div>
<div class="t m dis r" style="right:881px;top:105px">F12</div>
<div class="t m" style="left:102px;top:135px"><span class="u">A</span>usschneiden</div>
<div class="t m r" style="right:881px;top:135px">Strg+X</div>
<div class="t m" style="left:102px;top:157px"><span class="u">K</span>opieren</div>
<div class="t m r" style="right:881px;top:157px">Strg+C</div>
<div class="t m" style="left:102px;top:179px">E<span class="u">i</span>nfügen</div>
<div class="t m r" style="right:881px;top:179px">Strg+V</div>
<div class="t m" style="left:102px;top:201px">In<span class="u">h</span>alte einfügen...</div>
<div class="t m" style="left:102px;top:223px">Alles aus<span class="u">w</span>ählen</div>
<div class="t m r" style="right:881px;top:223px">Strg+A</div>
<div class="t m" style="left:102px;top:253px">Änder<span class="u">u</span>ngen</div>
<div class="a" style="left:399px;top:257px;width:0;height:0;border-top:4px solid transparent;border-bottom:4px solid transparent;border-left:4px solid #000"></div>
<div class="t m" style="left:102px;top:275px">Dokument ve<span class="u">r</span>gleichen...</div>
<div class="t m" style="left:102px;top:297px"><span class="u">S</span>uchen &amp; Ersetzen...</div>
<div class="t m r" style="right:881px;top:297px">Strg+G</div>
<div class="t m" style="left:102px;top:319px"><span class="u">N</span>avigator</div>
<div class="t m r" style="right:881px;top:319px">F5</div>
<div class="t m dis" style="left:102px;top:341px">Kopf- und Fu<span class="u">ß</span>zeilen...</div>
<div class="t m" style="left:102px;top:371px">Aus<span class="u">f</span>üllen</div>
<div class="a" style="left:399px;top:375px;width:0;height:0;border-top:4px solid transparent;border-bottom:4px solid transparent;border-left:4px solid #000"></div>
<div class="t m" style="left:102px;top:393px">Inhalte l<span class="u">ö</span>schen...</div>
<div class="t m r" style="right:881px;top:393px">Entf</div>
<div class="t m" style="left:102px;top:415px"><span class="u">Z</span>ellen löschen...</div>
<div class="t m" style="left:102px;top:437px"><span class="u">T</span>abelle</div>
<div class="a" style="left:399px;top:441px;width:0;height:0;border-top:4px solid transparent;border-bottom:4px solid transparent;border-left:4px solid #000"></div>
<div class="t m" style="left:102px;top:459px">Manuellen Umbruch <span class="u">l</span>öschen</div>
<div class="a" style="left:399px;top:463px;width:0;height:0;border-top:4px solid transparent;border-bottom:4px solid transparent;border-left:4px solid #000"></div>
<div class="t m dis" style="left:102px;top:489px"><span class="u">V</span>erknüpfungen...</div>
<div class="t m" style="left:102px;top:511px"><span class="u">P</span>lugIn</div>
<div class="t m dis" style="left:102px;top:533px">I<span class="u">m</span>ageMap</div>
<div class="t m dis" style="left:102px;top:555px"><span class="u">O</span>bjekt</div>
<div class="a" style="left:399px;top:559px;width:0;height:0;border-top:4px solid transparent;border-bottom:4px solid transparent;border-left:4px solid #aaa"></div>
<!-- ICONS_MENU_START -->
<svg class="a" style="left:78px;top:61px" width="18" height="14"><path d="M3 4L10 10" stroke="url(#dithb)" stroke-width="5"/><path d="M10 11L17 6" stroke="url(#dithb)" stroke-width="2"/></svg>
<svg class="a" style="left:78px;top:83px" width="18" height="14"><path d="M1 8L7 2" stroke="url(#dithb)" stroke-width="2"/><path d="M7 4L14 10" stroke="url(#dithb)" stroke-width="5"/></svg>
<svg class="a" style="left:80px;top:105px" width="15" height="15"><path d="M1 5V2.5Q1 1 2.5 1Q4 1 4 2.5V5 M5 8.5V6Q5 4.5 6.5 4.5Q8 4.5 8 6V8.5 M9 12V9.5Q9 8 10.5 8Q12 8 12 9.5V12 M4 5L5.5 6 M8 8.5L9.5 9.5 M12 12L13.5 13" fill="none" stroke="#000" stroke-width="1.1"/></svg>
<svg class="a" style="left:79px;top:133px" width="17" height="19"><path d="M6 10L13 1M8 11L16 3" stroke="#b0b0c0" stroke-width="1.4"/><circle cx="4.5" cy="12" r="3" fill="none" stroke="#f0a000" stroke-width="2"/><circle cx="10" cy="15" r="3" fill="none" stroke="#f0a000" stroke-width="2"/></svg>
<svg class="a" style="left:78px;top:155px" width="19" height="19"><path d="M1.5 1.5H8L10.5 4V12.5H1.5Z" fill="url(#page)" stroke="#a0a0c0"/><path d="M7.5 5.5H14L17.5 9V17.5H7.5Z" fill="url(#page)" stroke="#a0a0c0"/></svg>
<svg class="a" style="left:78px;top:177px" width="19" height="18"><rect x="1.5" y="2.5" width="11" height="13" rx="1" fill="url(#gold)" stroke="#c07010"/><rect x="4.5" y="0.5" width="5" height="3" rx="1.5" fill="#dde" stroke="#4a6aa0"/><path d="M8.5 5.5H14L17.5 9V16.5H8.5Z" fill="#bcd8ff" stroke="#4a80d0"/></svg>
<svg class="a" style="left:79px;top:221px" width="15" height="19"><path d="M1.5 1.5H9L13.5 6V17.5H1.5Z" fill="#4a6ae0" stroke="#3050b0"/><path d="M9 1.5V6H13.5" fill="#e8ecff" stroke="#3050b0"/><path d="M3 8H12M3 10H12M3 12H12M3 14H12" stroke="#7890f0"/></svg>
<svg class="a" style="left:78px;top:294px" width="18" height="19"><circle cx="7" cy="7" r="5" fill="#cfe6ff" stroke="#2a70c8" stroke-width="1.6"/><path d="M10.5 10.5L16 16" stroke="#b07020" stroke-width="2.6"/><circle cx="15" cy="3" r="1.3" fill="#2a4090"/><circle cx="2.5" cy="15.5" r="1.3" fill="#2a4090"/><circle cx="5" cy="16.5" r="1" fill="#2a4090"/></svg>
<svg class="a" style="left:78px;top:317px" width="18" height="18"><path d="M1 6L9 2L17 7L11 10L4 8Z" fill="#60a0e0" stroke="#335" stroke-width=".5"/><ellipse cx="8" cy="12.5" rx="5.5" ry="4" fill="#d0d0d0" stroke="#555" stroke-width=".7"/><ellipse cx="8" cy="11.5" rx="4" ry="2.6" fill="#fff"/><path d="M6 12.5L10 10.5" stroke="#e03030" stroke-width="1.3"/></svg>
<svg class="a" style="left:79px;top:340px" width="18" height="18"><path d="M1 8L10 2L16 6L16 9L1 9Z" fill="url(#dithgr)"/><rect x="1" y="10" width="15" height="6" fill="url(#dithb)" opacity=".8"/></svg>
<svg class="a" style="left:79px;top:391px" width="16" height="18"><path d="M1.5 1.5H9L13.5 6V16.5H1.5Z" fill="#fff" stroke="#9a9ab8"/><path d="M4 9L10 15M10 9L4 15" stroke="#e81010" stroke-width="2"/></svg>
<svg class="a" style="left:78px;top:510px" width="18" height="17"><rect x="2.5" y="2.5" width="12" height="12" fill="#fff" stroke="#999"/><path d="M6 4Q8 2 10 4Q12 5 12 7Q10 9 6 8Q4 9 5 11Q7 14 10 13M5 6H9M8 11H12" fill="none" stroke="#1a5ad0" stroke-width="1.2"/><g fill="#000"><rect x="1" y="1" width="3" height="3"/><rect x="13" y="1" width="3" height="3"/><rect x="1" y="7" width="3" height="3"/><rect x="13" y="7" width="3" height="3"/><rect x="1" y="13" width="3" height="3"/><rect x="13" y="13" width="3" height="3"/></g></svg>
<svg class="a" style="left:79px;top:531px" width="16" height="16"><path d="M2 9L9 3L14 6L8 14L3 13Z" fill="url(#dithb)"/><path d="M8 1H15V8L12 6Z" fill="url(#dithgr)" opacity=".9"/></svg>
<!-- ICONS_MENU_END -->

</body></html>
